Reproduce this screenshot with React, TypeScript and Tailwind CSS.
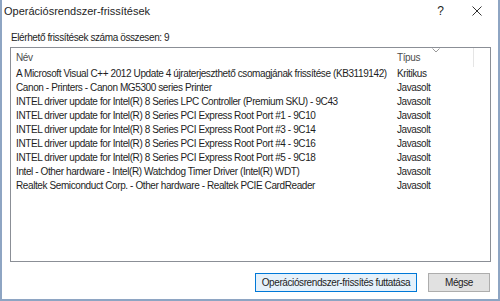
const updates = [
  ["A Microsoft Visual C++ 2012 Update 4 újraterjeszthető csomagjának frissítése (KB3119142)", "Kritikus"],
  ["Canon - Printers - Canon MG5300 series Printer", "Javasolt"],
  ["INTEL driver update for Intel(R) 8 Series LPC Controller (Premium SKU) - 9C43", "Javasolt"],
  ["INTEL driver update for Intel(R) 8 Series PCI Express Root Port #1 - 9C10", "Javasolt"],
  ["INTEL driver update for Intel(R) 8 Series PCI Express Root Port #3 - 9C14", "Javasolt"],
  ["INTEL driver update for Intel(R) 8 Series PCI Express Root Port #4 - 9C16", "Javasolt"],
  ["INTEL driver update for Intel(R) 8 Series PCI Express Root Port #5 - 9C18", "Javasolt"],
  ["Intel - Other hardware - Intel(R) Watchdog Timer Driver (Intel(R) WDT)", "Javasolt"],
  ["Realtek Semiconduct Corp. - Other hardware - Realtek PCIE CardReader", "Javasolt"],
];

export default function App() {
  return (
    <div className="w-[500px] h-[301px] bg-white border-l-2 border-r-2 border-b-2 border-[#8ea5c3] flex flex-col text-[#1e1e1e] font-['Liberation_Sans',Arial,sans-serif] text-[10px] leading-none">
      {/* title bar */}
      <div className="h-[22px] flex items-center justify-between pl-[2px] pr-[16px]">
        <span className="text-[11px]">Operációsrendszer-frissítések</span>
        <div className="flex items-center gap-[28px] text-[12px]">
          <span>?</span>
          <svg width="10" height="10" viewBox="0 0 10 10" className="stroke-[#333]">
            <path d="M0.5 0.5L9.5 9.5M9.5 0.5L0.5 9.5" strokeWidth="1" />
          </svg>
        </div>
      </div>

      <div className="flex-1 flex flex-col px-[8px] tracking-[-0.4px]">
        <div className="pt-[11px] pl-[1px] h-[25px]">Elérhető frissítések száma összesen: 9</div>

        {/* list box */}
        <div className="w-[481px] h-[215px] border border-[#8b8f96] bg-white">
          <div className="h-[19px] flex relative">
            <div className="w-[383px] pl-[5px] flex items-center text-[#4d4d4d]">Név</div>
            <div className="w-[80px] pl-[3px] flex items-center border-r border-[#e5e5e5] text-[#4d4d4d] relative">
              Típus
              <svg width="8" height="5" viewBox="0 0 8 5" className="absolute left-[38px] top-[0px] stroke-[#9a9a9a]">
                <path d="M0.5 0.5L4 4L7.5 0.5" fill="none" strokeWidth="1" />
              </svg>
            </div>
          </div>
          <div className="flex flex-col">
            {updates.map(([name, type]) => (
              <div key={name} className="h-[14px] flex items-center">
                <div className="w-[383px] pl-[5px] whitespace-nowrap">{name}</div>
                <div className="pl-[3px]">{type}</div>
              </div>
            ))}
          </div>
        </div>

        <div className="flex justify-end gap-[11px] mt-[11px]">
          <button className="w-[162px] h-[19px] bg-[#e5f1fb] border border-[#0078d7] text-[10px] whitespace-nowrap tracking-[-0.4px]">
            Operációsrendszer-frissítés futtatása
          </button>
          <button className="w-[62px] h-[19px] bg-[#e1e1e1] border border-[#adadad] text-[10px] tracking-[-0.4px]">
            Mégse
          </button>
        </div>
      </div>
    </div>
  );
}
